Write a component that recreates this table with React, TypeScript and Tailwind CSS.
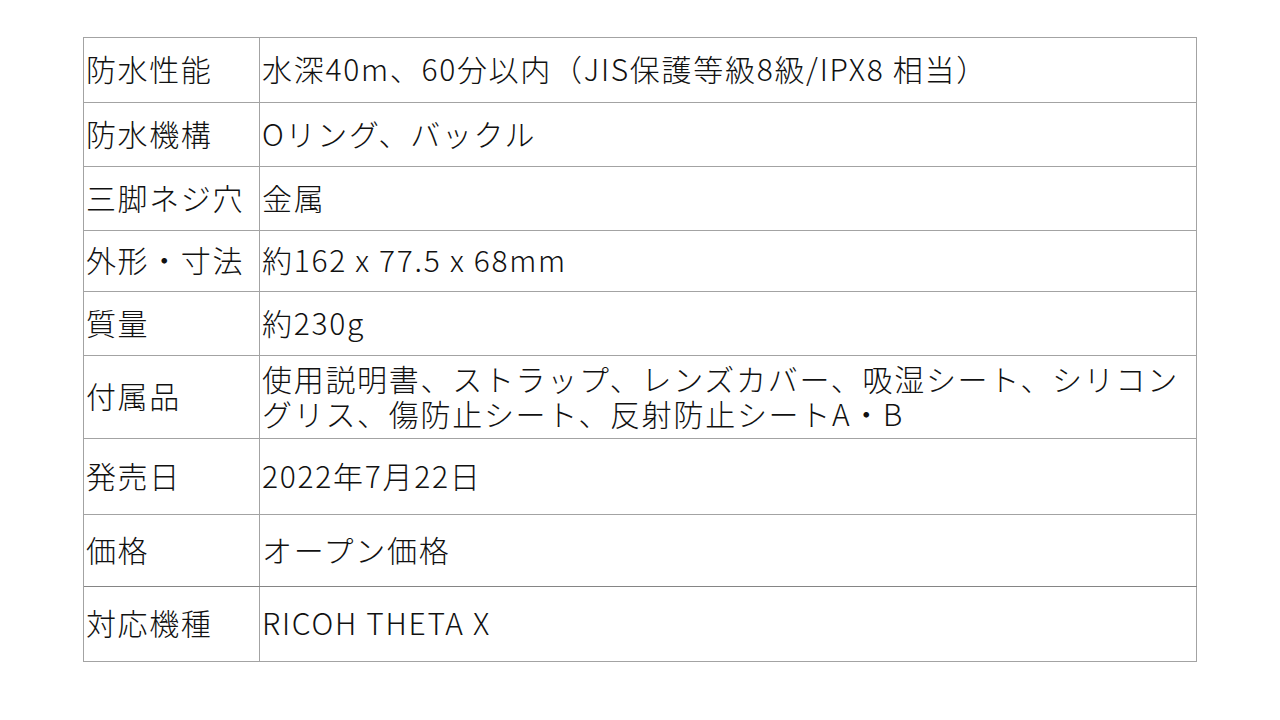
const ROWS = [
  { label: "防水性能", value: ["水深40m、60分以内（JIS保護等級8級/IPX8 相当）"], h: "h-[65px]" },
  { label: "防水機構", value: ["Oリング、バックル"], h: "h-[64px]" },
  { label: "三脚ネジ穴", value: ["金属"], h: "h-[64px]" },
  { label: "外形・寸法", value: ["約162 x 77.5 x 68mm"], h: "h-[61px]" },
  { label: "質量", value: ["約230g"], h: "h-[64px]" },
  {
    label: "付属品",
    value: [
      "使用説明書、ストラップ、レンズカバー、吸湿シート、シリコン",
      "グリス、傷防止シート、反射防止シートA・B",
    ],
    h: "h-[83px]",
  },
  { label: "発売日", value: ["2022年7月22日"], h: "h-[76px]" },
  { label: "価格", value: ["オープン価格"], h: "h-[72px]", dark: true },
  { label: "対応機種", value: ["RICOH THETA X"], h: "h-[75px]" },
];

export default function App() {
  return (
    <div className="min-h-[720px] w-[1280px] bg-white pt-[37px] pl-[83px] font-['Noto_Sans_CJK_JP','Noto_Sans',sans-serif] font-light text-[#111]">
      <div className="w-[1114px] border-l border-t border-[#a3a3a3]">
        {ROWS.map((row) => (
          <div
            key={row.label}
            className={`flex ${row.h} border-b ${row.dark ? "border-[#858585]" : "border-[#a3a3a3]"}`}
          >
            <div className="flex w-[176px] shrink-0 items-center border-r border-[#a3a3a3] pl-[2px] pb-[3px] text-[30px] leading-[35px] tracking-[1.6px]">
              {row.label}
            </div>
            <div className="flex flex-1 flex-col justify-center border-r border-[#a3a3a3] pl-[2px] pb-[3px] text-[30px] leading-[35px] tracking-[1.7px]">
              {row.value.map((line) => (
                <div key={line} className="whitespace-nowrap">
                  {line}
                </div>
              ))}
            </div>
          </div>
        ))}
      </div>
    </div>
  );
}
